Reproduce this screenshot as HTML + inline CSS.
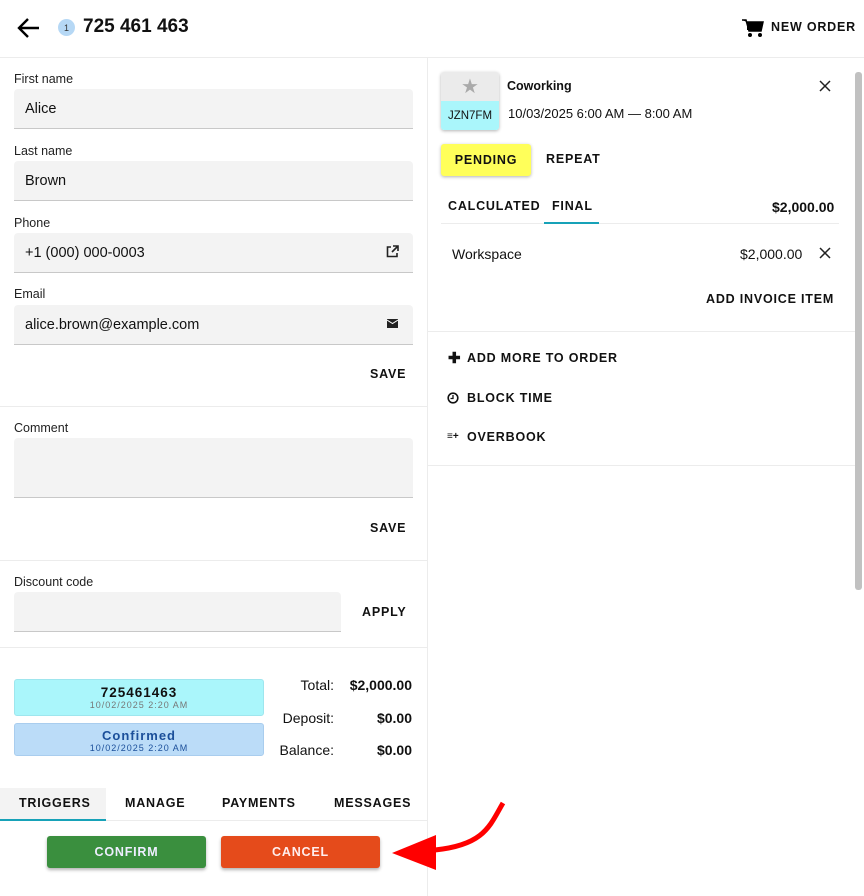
<!DOCTYPE html>
<html><head><style>
*{box-sizing:border-box;margin:0;padding:0}
body{width:864px;height:896px;background:#fff;font-family:"Liberation Sans",sans-serif;color:#111;position:relative;overflow:hidden}
.a{position:absolute}
.lbl{font-size:12.5px;color:#222}
.in{background:#f3f3f3;border-bottom:1px solid #c8c8c8;border-radius:4px 4px 0 0;font-size:14.5px;padding-left:11px;display:flex;align-items:center}
.btn{font-size:12.5px;font-weight:bold;letter-spacing:0.8px}
.hr{height:1px;background:#ececec}
.c{display:flex;align-items:center;justify-content:center}
</style></head><body>
<svg class="a" style="left:17px;top:17px" width="24" height="22" viewBox="0 0 24 22"><path d="M22 11H3M11 2L2 11l9 9" stroke="#000" stroke-width="2.4" fill="none"/></svg>
<div class="a c" style="left:58px;top:19px;width:17px;height:17px;border-radius:50%;background:#b6d8f5;font-size:9px;color:#333">1</div>
<div class="a" style="left:83px;top:16px;font-size:19px;font-weight:bold">725 461 463</div>
<svg class="a" style="left:742px;top:19px" width="22" height="19" viewBox="0 0 22 19"><path d="M0 1h4l3 11h12l2-9H5" fill="#000" stroke="#000" stroke-width="1.5"/><rect x="5" y="3" width="15" height="8" fill="#000"/><circle cx="8" cy="16" r="2"/><circle cx="18" cy="16" r="2"/></svg>
<div class="a btn" style="left:771px;top:20px">NEW ORDER</div>
<div class="a hr" style="left:0;top:57px;width:864px"></div>
<div class="a" style="left:427px;top:58px;width:1px;height:838px;background:#ececec"></div>
<div class="a lbl" style="left:14px;top:72px">First name</div>
<div class="a in" style="left:14px;top:89px;width:399px;height:40px">Alice</div>
<div class="a lbl" style="left:14px;top:144px">Last name</div>
<div class="a in" style="left:14px;top:161px;width:399px;height:40px">Brown</div>
<div class="a lbl" style="left:14px;top:216px">Phone</div>
<div class="a in" style="left:14px;top:233px;width:399px;height:40px">+1 (000) 000-0003</div>
<svg class="a" style="left:386px;top:245px" width="13" height="13" viewBox="0 0 13 13"><path d="M5 2H1.5v9.5H11V8M7 1h5v5M12 1L6 7" stroke="#222" stroke-width="1.6" fill="none"/></svg>
<div class="a lbl" style="left:14px;top:287px">Email</div>
<div class="a in" style="left:14px;top:305px;width:399px;height:40px">alice.brown@example.com</div>
<svg class="a" style="left:387px;top:319px" width="11" height="9" viewBox="0 0 11 9"><rect width="11" height="9" fill="#222"/><path d="M0 1l5.5 3.5L11 1" stroke="#fff" stroke-width="1" fill="none"/></svg>
<div class="a btn" style="left:370px;top:367px">SAVE</div>
<div class="a hr" style="left:0;top:406px;width:427px"></div>
<div class="a lbl" style="left:14px;top:421px">Comment</div>
<div class="a in" style="left:14px;top:438px;width:399px;height:60px"></div>
<div class="a btn" style="left:370px;top:521px">SAVE</div>
<div class="a hr" style="left:0;top:560px;width:427px"></div>
<div class="a lbl" style="left:14px;top:575px">Discount code</div>
<div class="a in" style="left:14px;top:592px;width:327px;height:40px"></div>
<div class="a btn" style="left:362px;top:605px">APPLY</div>
<div class="a hr" style="left:0;top:647px;width:427px"></div>
<div class="a" style="left:14px;top:679px;width:250px;height:37px;background:#aaf6fb;border:1px solid #9ee6ee;border-radius:3px;text-align:center">
<div style="font-size:13.5px;font-weight:bold;letter-spacing:1px;margin-top:5px">725461463</div><div style="font-size:9px;color:#777;letter-spacing:1px">10/02/2025 2:20 AM</div></div>
<div class="a" style="left:14px;top:723px;width:250px;height:33px;background:#bbdcf8;border:1px solid #a9cdee;border-radius:3px;text-align:center;color:#1b4f9a">
<div style="font-size:13px;font-weight:bold;letter-spacing:1px;margin-top:4px">Confirmed</div><div style="font-size:9px;letter-spacing:1px">10/02/2025 2:20 AM</div></div>
<div class="a" style="left:250px;top:669px;width:84px;text-align:right;font-size:14px;line-height:32.5px">Total:<br>Deposit:<br>Balance:</div>
<div class="a" style="left:334px;top:669px;width:78px;text-align:right;font-size:14px;font-weight:bold;line-height:32.5px">$2,000.00<br>$0.00<br>$0.00</div>
<div class="a" style="left:0;top:788px;width:106px;height:33px;background:#f3f3f3;border-bottom:2px solid #17a2b8"></div>
<div class="a hr" style="left:106px;top:820px;width:321px"></div>
<div class="a btn" style="left:19px;top:796px">TRIGGERS</div>
<div class="a btn" style="left:125px;top:796px">MANAGE</div>
<div class="a btn" style="left:222px;top:796px">PAYMENTS</div>
<div class="a btn" style="left:334px;top:796px">MESSAGES</div>
<div class="a c btn" style="left:47px;top:836px;width:159px;height:32px;background:#3a8f3e;color:#eef;border-radius:3px;box-shadow:0 2px 3px rgba(0,0,0,.3)">CONFIRM</div>
<div class="a c btn" style="left:221px;top:836px;width:159px;height:32px;background:#e54b1b;color:#fee;border-radius:3px;box-shadow:0 2px 3px rgba(0,0,0,.3)">CANCEL</div>
<svg class="a" style="left:390px;top:795px" width="120" height="75" viewBox="0 0 120 75"><path d="M113 8C100 30 95 50 45 55" stroke="#f00" stroke-width="5" fill="none"/><path d="M2 58L46 40L46 75Z" fill="#f00"/></svg>
<div class="a" style="left:441px;top:72px;width:58px;height:58px;border-radius:3px;overflow:hidden;box-shadow:0 1px 3px rgba(0,0,0,.3)">
<div class="c" style="height:29px;background:#ebebeb;color:#aaa;font-size:20px">★</div>
<div class="c" style="height:29px;background:#aaf6fb;font-size:11.5px">JZN7FM</div></div>
<div class="a" style="left:507px;top:79px;font-size:12.5px;font-weight:bold">Coworking</div>
<div class="a" style="left:508px;top:106px;font-size:13px">10/03/2025 6:00 AM — 8:00 AM</div>
<svg class="a" style="left:819px;top:80px" width="12" height="12"><path d="M1 1l10 10M11 1L1 11" stroke="#222" stroke-width="1.5"/></svg>
<div class="a c btn" style="left:441px;top:144px;width:90px;height:32px;background:#ffff5a;border-radius:3px;box-shadow:0 1px 3px rgba(0,0,0,.3)">PENDING</div>
<div class="a btn" style="left:546px;top:152px">REPEAT</div>
<div class="a btn" style="left:448px;top:199px">CALCULATED</div>
<div class="a btn" style="left:552px;top:199px">FINAL</div>
<div class="a" style="left:772px;top:199px;font-size:14px;font-weight:bold">$2,000.00</div>
<div class="a hr" style="left:441px;top:223px;width:398px"></div>
<div class="a" style="left:544px;top:222px;width:55px;height:2px;background:#17a2b8"></div>
<div class="a" style="left:452px;top:246px;font-size:14px">Workspace</div>
<div class="a" style="left:740px;top:246px;font-size:14px">$2,000.00</div>
<svg class="a" style="left:819px;top:247px" width="12" height="12"><path d="M1 1l10 10M11 1L1 11" stroke="#222" stroke-width="1.5"/></svg>
<div class="a btn" style="left:706px;top:292px">ADD INVOICE ITEM</div>
<div class="a hr" style="left:428px;top:331px;width:427px"></div>
<div class="a" style="left:448px;top:349px;font-size:15px;font-weight:bold">✚</div>
<div class="a btn" style="left:467px;top:351px">ADD MORE TO ORDER</div>
<svg class="a" style="left:447px;top:392px" width="12" height="12"><circle cx="6" cy="6" r="4.8" stroke="#111" stroke-width="1.6" fill="none"/><path d="M6 3v3.5H3.5" stroke="#111" stroke-width="1.3" fill="none"/></svg>
<div class="a btn" style="left:467px;top:391px">BLOCK TIME</div>
<div class="a" style="left:447px;top:431px;font-size:10px;font-weight:bold">≡+</div>
<div class="a btn" style="left:467px;top:430px">OVERBOOK</div>
<div class="a hr" style="left:428px;top:465px;width:427px"></div>
<div class="a" style="left:855px;top:72px;width:7px;height:518px;background:#c1c1c1;border-radius:3px"></div>
</body></html>
